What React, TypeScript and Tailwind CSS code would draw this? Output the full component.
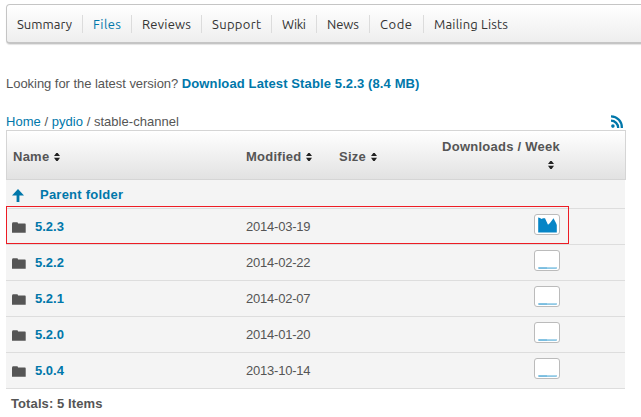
const nav = [
  { label: 'Summary', box: 'w-[76px]', text: 'w-[55px]', len: 55 },
  { label: 'Files', box: 'w-[49px]', text: 'w-[28px]', len: 28 },
  { label: 'Reviews', box: 'w-[70px]', text: 'w-[49px]', len: 49 },
  { label: 'Support', box: 'w-[70px]', text: 'w-[49px]', len: 49 },
  { label: 'Wiki', box: 'w-[45px]', text: 'w-[24px]', len: 24 },
  { label: 'News', box: 'w-[53px]', text: 'w-[32px]', len: 32 },
  { label: 'Code', box: 'w-[54px]', text: 'w-[32px]', len: 32 },
  { label: 'Mailing Lists', box: 'w-[90px]', text: 'w-[74px]', len: 74 },
];

const rows = [
  { name: '5.2.3', date: '2014-03-19', busy: true },
  { name: '5.2.2', date: '2014-02-22', busy: false },
  { name: '5.2.1', date: '2014-02-07', busy: false },
  { name: '5.2.0', date: '2014-01-20', busy: false },
  { name: '5.0.4', date: '2013-10-14', busy: false },
];

function Sort() {
  return (
    <svg width="6" height="8" viewBox="0 0 6 8" className="shrink-0" fill="#222">
      <path d="M2.3 0H3.7L6 3H0ZM0 4.7H6L3.7 8H2.3Z" />
    </svg>
  );
}

function Folder() {
  return (
    <svg width="14" height="11" viewBox="0 0 14 11" className="mt-px" fill="#555">
      <path d="M0 2Q0 .3 1 .3H5Q6 .3 6 1.5H13Q13.7 1.5 13.7 2.5V10.7H0Z" />
    </svg>
  );
}

function Spark({ busy }: { busy: boolean }) {
  return (
    <div className="h-[21px] w-[26px] rounded-[3px] border border-[#bbb] bg-white">
      <svg width="24" height="19" viewBox="0 0 24 19" className="block">
        {busy ? (
          <>
            <path d="M3.2 17V2.5L5 3 6.5 4 8 3.2H10L13 9.8 15 8 18.5 3.3 21 8 21.8 10V17Z" fill="#0685c6" />
            <path d="M3.2 17H21.8V18H3.2Z" fill="#83c2e2" />
          </>
        ) : (
          <>
            <path d="M3 16H22V18H3Z" fill="#a9d5eb" />
            <path d="M4 16.3H12V17.5H21V18H4Z" fill="#79bde0" />
          </>
        )}
      </svg>
    </div>
  );
}

export default function App() {
  return (
    <div className="h-[417px] w-[641px] overflow-hidden bg-white pl-[6px] pt-[4px] font-['Liberation_Sans',Arial,sans-serif] text-[13px] leading-[16px] text-[#555]">
      <nav className="flex h-[40px] w-[650px] items-center rounded-[4px] border border-b-2 border-[#c5c5c5] bg-linear-to-b from-white to-[#eeeeee] shadow-[0_1px_1px_#e4e4e4]">
        {nav.map((n, i) => (
          <div
            key={n.label}
            className={`flex h-[18px] shrink-0 items-center pl-[10px] ${n.box} ${i < nav.length - 1 ? 'border-r border-[#dcdcdc]' : ''}`}
          >
            <svg height="20" className={`shrink-0 overflow-visible ${n.text}`}>
              <text
                x="0"
                y="15"
                textLength={n.len}
                className={`font-['Ubuntu','Noto_Sans',sans-serif] text-[13px] ${n.label === 'Files' ? 'fill-[#0077aa]' : 'fill-[#333]'}`}
              >
                {n.label}
              </text>
            </svg>
          </div>
        ))}
      </nav>
      <p className="mt-[32px] h-[16px] whitespace-nowrap">
        <span className="tracking-[-0.04px]">Looking for the latest version? </span>
        <a className="font-bold tracking-[0.12px] text-[#0077aa]">Download Latest Stable 5.2.3 (8.4 MB)</a>
      </p>
      <div className="mt-[22px] flex h-[16px] w-[620px] justify-between whitespace-nowrap">
        <div className="tracking-[0.03px]">
          <a className="text-[#0077aa]">Home</a> / <a className="text-[#0077aa]">pydio</a> / stable-channel
        </div>
        <svg width="12" height="13" viewBox="0 0 12 13" className="mr-[3px] mt-[1px]" fill="none" stroke="#0077aa">
          <circle cx="1.9" cy="11.1" r="1.8" fill="#0077aa" stroke="none" />
          <path d="M0 5.7A7.2 7.2 0 0 1 7.2 13M0 1.3A11 11 0 0 1 10.8 13" strokeWidth="2.3" />
        </svg>
      </div>
      <div className="flex h-[50px] w-[620px] items-center border border-[#d5d5d5] bg-linear-to-b from-white to-[#e2e2e2] pt-[3px] font-bold tracking-[0.25px]">
        <div className="flex w-[239px] items-center gap-[5px] pl-[6px]">Name <Sort /></div>
        <div className="flex w-[93px] items-center gap-[5px]">Modified <Sort /></div>
        <div className="flex w-[97px] items-center gap-[5px]">Size <Sort /></div>
        <div className="mt-[-6px] flex w-[124px] flex-col items-end whitespace-nowrap">
          <span className="h-[22px]">Downloads / Week</span>
          <span className="mr-[6px] flex h-[8px]"><Sort /></span>
        </div>
      </div>
      <div className="relative w-[619px]">
        <div className="flex h-[29px] items-center border-b border-[#dddddd] bg-[#f4f4f4] pl-[6px] pt-[2px] font-bold tracking-[0.23px] text-[#0077aa]">
          <svg width="12" height="13" viewBox="0 0 12 13" className="mr-[16px] mt-px" fill="#0077aa">
            <path d="M6 0 12 6.5H7.4V13H4.6V6.5H0Z" />
          </svg>
          Parent folder
        </div>
        {rows.map((r) => (
          <div key={r.name} className="flex h-[36px] items-center border-b border-[#dddddd] bg-[#f4f4f4]">
            <div className="flex w-[240px] items-center gap-[9px] pl-[6px] font-bold text-[#0077aa]">
              <Folder />
              {r.name}
            </div>
            <div className="w-[288px] tracking-[-0.22px]">{r.date}</div>
            <div className="mt-[-4px]"><Spark busy={r.busy} /></div>
          </div>
        ))}
        <div className="absolute left-0 top-[26px] h-[38px] w-[563px] border border-[#ed1c24]" />
      </div>
      <div className="pl-[5px] pt-[7px] font-bold tracking-[0.1px]">Totals: 5 Items</div>
    </div>
  );
}
